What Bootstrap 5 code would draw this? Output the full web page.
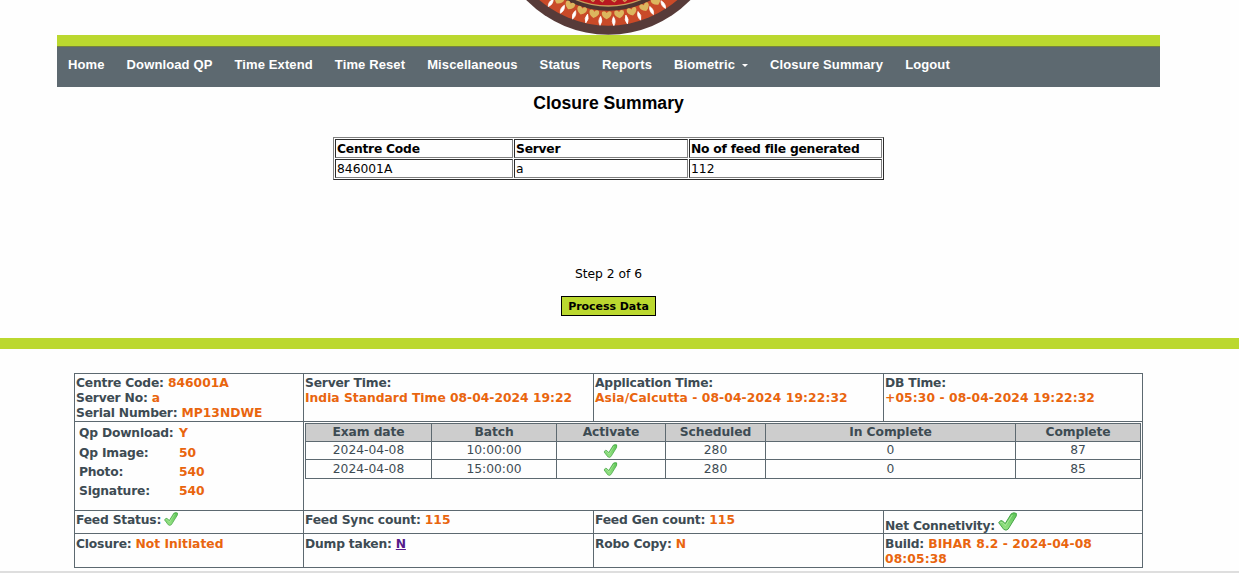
<!DOCTYPE html>
<html lang="en">
<head>
<meta charset="utf-8">
<title>Closure Summary</title>
<link href="https://cdn.jsdelivr.net/npm/bootstrap@5.3.0/dist/css/bootstrap.min.css" rel="stylesheet">
<script src="https://cdn.jsdelivr.net/npm/bootstrap@5.3.0/dist/js/bootstrap.bundle.min.js"></script>
<style>
body{background:#fefefe;color:#000;font:12.3px/15px "DejaVu Sans",Verdana,sans-serif;height:573px;overflow:hidden}
.page-col{width:1103px;margin-left:57px}
.seal{display:block;width:220px;height:35px;margin-left:443px}
.site-nav{background:#5d6970;border-top:11px solid #bbd82f;height:52px;padding:0;box-shadow:inset 0 1px #76823f}
.site-nav .navbar-nav .nav-link{color:#fff;font:bold 13px/16px "Liberation Sans",Arial,sans-serif;padding:0 11px;letter-spacing:.12px;white-space:nowrap}
.site-nav .navbar-nav{height:37px}
.site-nav .dropdown-toggle::after{border-width:3.5px;border-top-width:3.5px;margin-left:7px;vertical-align:2px;border-bottom:0}
h1{font:bold 17.6px/22px "Liberation Sans",Arial,sans-serif;margin:5px 0 0;height:45px}
.feed{width:551px;margin-left:276px;border:1px solid;border-color:#808080 #2c2c2c #2c2c2c #808080;border-collapse:separate;border-spacing:1px;table-layout:fixed}
.feed th,.feed td{height:19px;padding:1px 1px 0;border:1px solid;border-color:#2c2c2c #808080 #808080 #2c2c2c;line-height:16px}
.feed th{letter-spacing:-.23px}
.step{margin-top:87px;height:29px}
.go{height:20px;width:95px;border:1px solid #000;border-radius:0;background:#bbd82f;color:#000;font-weight:bold;font-size:11px;line-height:20px;padding:0;letter-spacing:-.05px}
.go:hover{background:#bbd82f;color:#000}
.rule{height:11px;background:#bbd82f;margin-top:22px}
.stat{width:1069px;margin:24px 0 0 74px;table-layout:fixed;border-collapse:collapse;color:#3d4b53;font-weight:bold;letter-spacing:-.2px}
.stat>tbody>tr>td{border:1px solid #5d6970;padding:2px 1px 0 1px;vertical-align:top}
.stat>tbody>tr>td.holder{padding:1px}
.stat>tbody>tr:last-child>td{padding-top:3px}
.stat b{color:#e9650e;letter-spacing:0}
.stat b.stamp{letter-spacing:.1px}
.stat a{color:#551a8b}
.batch{width:836px;margin:0;table-layout:fixed;border-collapse:collapse;text-align:center;font-weight:normal;letter-spacing:0}
.batch th{background:#cdcdcd;letter-spacing:-.1px}
.batch th,.batch td{border:1px solid #5d6970;padding:0;height:18px;line-height:17px}
.batch tr:last-child td{height:19px}
.batch svg{display:block;margin:0 auto;transform:translateX(-.5px)}
.qp{display:grid;grid-template-columns:100px 1fr;grid-auto-rows:19.3px;padding:2.4px 0 0 3px}
.foot{height:2px;background:#dedede;margin-top:3px}
</style>
</head>
<body>
<svg width="0" height="0" class="position-absolute">
<defs>
<linearGradient id="leaf" x1="0" y1="0" x2="0" y2="1"><stop offset="0" stop-color="#5cc455"/><stop offset="1" stop-color="#98e486"/></linearGradient>
<symbol id="tick" viewBox="0 0 18 18"><path d="M.6 10L2.600 8.200L4.200 8.400L6.800 11L12.600 1.600L15 .7L17.400 1.400L17.300 3.800L9.600 16.200L7.600 17.200L5.400 16.400Z" fill="url(#leaf)" stroke="#3f9f41" stroke-width=".9" stroke-linejoin="round"/><path d="M2.300 10L4 9.800L7 13L13.600 2.800" fill="none" stroke="#b4eba5" stroke-width=".8"/></symbol>
<path id="drop" d="M0 -14Q9 0 0 13Q-9 0 0 -14Z" fill="#fff" stroke="#fff" stroke-width="2"/>
<path id="petal" d="M-14 -10Q-6 -16 0 -7Q6 -16 14 -10Q18 3 0 12Q-18 3 -14 -10Z" fill="#dcb65e"/>
</defs>
</svg>
<header class="page-col">
<svg class="seal" viewBox="0 0 660 105">
<circle cx="325" cy="-240" r="344" fill="#573b39"/>
<circle cx="325" cy="-240" r="317" fill="#c94a28"/>
<circle cx="325" cy="-240" r="272" fill="#4d3430"/>
<circle cx="325" cy="-240" r="260" fill="#c7a15c"/>
<circle cx="325" cy="-240" r="256" fill="#b81820"/>
<path d="M273 0l6 4 5-4M300 0l7 5 5-5M335 0l8 5 6-5M369 0l5 4 6-4" stroke="#d2a054" stroke-width="4" fill="none"/>
<use href="#petal" transform="translate(176 0) rotate(31)"/><use href="#petal" transform="translate(209 17) rotate(24)"/><use href="#petal" transform="translate(245 32) rotate(16)"/><use href="#petal" transform="translate(282 42) rotate(9)"/><use href="#petal" transform="translate(320 46) rotate(1)"/><use href="#petal" transform="translate(358 43) rotate(-7)"/><use href="#petal" transform="translate(396 35) rotate(-15)"/><use href="#petal" transform="translate(434 22) rotate(-22)"/><use href="#petal" transform="translate(469 4) rotate(-30)"/>
<use href="#drop" transform="translate(152 9) rotate(34)"/><use href="#drop" transform="translate(187 28) rotate(27)"/><use href="#drop" transform="translate(222 45) rotate(20)"/><use href="#drop" transform="translate(260 56) rotate(12)"/><use href="#drop" transform="translate(301 63) rotate(4)"/><use href="#drop" transform="translate(341 64) rotate(-3)"/><use href="#drop" transform="translate(380 59) rotate(-10)"/><use href="#drop" transform="translate(418 48) rotate(-17)"/><use href="#drop" transform="translate(455 32) rotate(-25)"/><use href="#drop" transform="translate(490 14) rotate(-31)"/>
</svg>
<nav class="navbar navbar-expand site-nav align-items-start">
<ul class="navbar-nav align-items-center">
<li class="nav-item"><a class="nav-link" href="#">Home</a></li>
<li class="nav-item"><a class="nav-link" href="#">Download QP</a></li>
<li class="nav-item"><a class="nav-link" href="#">Time Extend</a></li>
<li class="nav-item"><a class="nav-link" href="#">Time Reset</a></li>
<li class="nav-item"><a class="nav-link" href="#">Miscellaneous</a></li>
<li class="nav-item"><a class="nav-link" href="#">Status</a></li>
<li class="nav-item"><a class="nav-link" href="#">Reports</a></li>
<li class="nav-item dropdown"><a class="nav-link dropdown-toggle" href="#" data-bs-toggle="dropdown">Biometric</a></li>
<li class="nav-item"><a class="nav-link" href="#">Closure Summary</a></li>
<li class="nav-item"><a class="nav-link" href="#">Logout</a></li>
</ul>
</nav>
</header>
<main class="page-col">
<h1 class="text-center">Closure Summary</h1>
<table class="feed">
<colgroup><col style="width:178px"><col style="width:174px"><col></colgroup>
<tr><th>Centre Code</th><th>Server</th><th>No of feed file generated</th></tr>
<tr><td>846001A</td><td>a</td><td>112</td></tr>
</table>
<div class="step text-center">Step 2 of 6</div>
<button class="btn go d-block mx-auto">Process Data</button>
</main>
<div class="rule"></div>
<table class="stat">
<colgroup><col style="width:229px"><col style="width:290px"><col style="width:290px"><col></colgroup>
<tr style="height:48px"><td>Centre Code: <b>846001A</b><br>Server No: <b>a</b><br>Serial Number: <b>MP13NDWE</b></td><td>Server Time:<br><b>India Standard Time 08-04-2024 19:22</b></td><td>Application Time:<br><b class="stamp">Asia/Calcutta - 08-04-2024 19:22:32</b></td><td>DB Time:<br><b class="stamp">+05:30 - 08-04-2024 19:22:32</b></td></tr>
<tr style="height:89px"><td><div class="qp"><span>Qp Download:</span><b>Y</b><span>Qp Image:</span><b>50</b><span>Photo:</span><b>540</b><span>Signature:</span><b>540</b></div></td>
<td colspan="3" class="holder">
<table class="batch">
<colgroup><col style="width:126px"><col style="width:125px"><col style="width:109px"><col style="width:100px"><col style="width:250px"><col></colgroup>
<tr><th>Exam date</th><th>Batch</th><th>Activate</th><th>Scheduled</th><th>In Complete</th><th>Complete</th></tr>
<tr><td>2024-04-08</td><td>10:00:00</td><td><svg width="14" height="14"><use href="#tick"/></svg></td><td>280</td><td>0</td><td>87</td></tr>
<tr><td>2024-04-08</td><td>15:00:00</td><td><svg width="14" height="14"><use href="#tick"/></svg></td><td>280</td><td>0</td><td>85</td></tr>
</table>
</td></tr>
<tr style="height:23px"><td><div class="d-flex">Feed Status:<svg style="margin:-1px 0 0 3px" width="14" height="14"><use href="#tick"/></svg></div></td><td>Feed Sync count: <b>115</b></td><td>Feed Gen count: <b>115</b></td><td><div class="d-flex align-items-end" style="height:19px"><span style="line-height:12px">Net Connetivity:</span><svg class="flex-shrink-0" style="margin:0 0 1px 3px" width="19" height="19"><use href="#tick"/></svg></div></td></tr>
<tr style="height:34px"><td>Closure: <b>Not Initiated</b></td><td>Dump taken: <a href="#">N</a></td><td>Robo Copy: <b>N</b></td><td>Build: <b class="stamp">BIHAR 8.2 - 2024-04-08 08:05:38</b></td></tr>
</table>
<div class="foot"></div>
</body>
</html>
